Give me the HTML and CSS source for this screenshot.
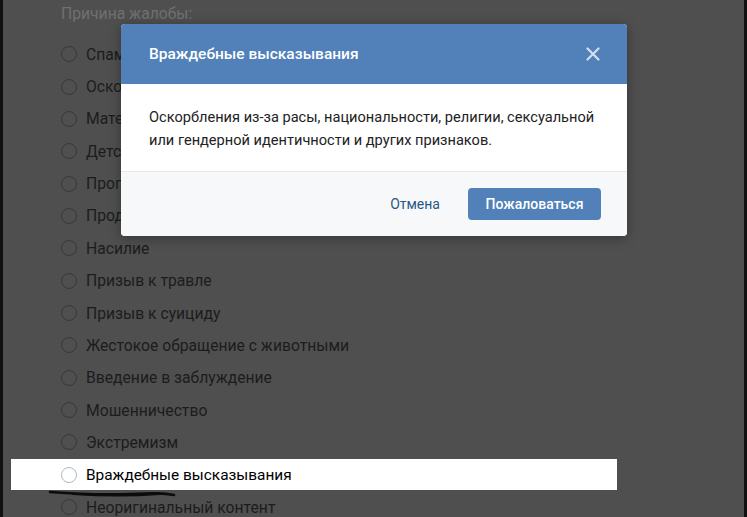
FILE: index.html
```html
<!DOCTYPE html>
<html lang="ru">
<head>
<meta charset="utf-8">
<title>Жалоба</title>
<link rel="stylesheet" href="styles.css">
</head>
<body>
<div class="page">
  <div class="edge"></div>
  <main class="content">
    <div class="caption">Причина жалобы:</div>
    <ul class="reasons">
      <li class="reason"><span class="radio"></span>Спам</li>
      <li class="reason"><span class="radio"></span>Оскорбления</li>
      <li class="reason"><span class="radio"></span>Материал для взрослых</li>
      <li class="reason"><span class="radio"></span>Детская порнография</li>
      <li class="reason"><span class="radio"></span>Пропаганда наркотиков</li>
      <li class="reason"><span class="radio"></span>Продажа оружия</li>
      <li class="reason"><span class="radio"></span>Насилие</li>
      <li class="reason"><span class="radio"></span>Призыв к травле</li>
      <li class="reason"><span class="radio"></span>Призыв к суициду</li>
      <li class="reason"><span class="radio"></span>Жестокое обращение с животными</li>
      <li class="reason"><span class="radio"></span>Введение в заблуждение</li>
      <li class="reason"><span class="radio"></span>Мошенничество</li>
      <li class="reason"><span class="radio"></span>Экстремизм</li>
      <li class="reason reason-active"><span class="radio"></span>Враждебные высказывания</li>
      <li class="reason"><span class="radio"></span>Неоригинальный контент</li>
    </ul>
    <svg class="scribble" width="130" height="10" viewBox="0 0 130 10">
      <path d="M2 4 C 28 6, 55 7, 82 6 S 115 5, 126 7" fill="none" stroke="#0c0c0c" stroke-width="2.6" stroke-linecap="round"/>
      <path d="M25 6 C 55 8, 85 8, 112 6" fill="none" stroke="#0c0c0c" stroke-width="2" stroke-linecap="round"/>
    </svg>
  </main>
  <div class="edge"></div>

  <div class="modal">
    <div class="modal-head">
      <span class="modal-title">Враждебные высказывания</span>
      <svg class="modal-close" width="14" height="14" viewBox="0 0 14 14">
        <path d="M1.5 1.5 L12.5 12.5 M12.5 1.5 L1.5 12.5" stroke="#ffffff" stroke-opacity="0.75" stroke-width="2.2" stroke-linecap="round"/>
      </svg>
    </div>
    <div class="modal-body">Оскорбления из-за расы, национальности, религии, сексуальной или гендерной идентичности и других признаков.</div>
    <div class="modal-foot">
      <span class="btn-link">Отмена</span>
      <span class="btn-primary">Пожаловаться</span>
    </div>
  </div>
</div>
</body>
</html>
```

FILE: styles.css
```css
html, body {
  margin: 0;
  padding: 0;
  height: 100%;
}
body {
  background: #4f4f4f;
  font-family: Roboto, "Liberation Sans", Arial, sans-serif;
  overflow: hidden;
}
.page {
  position: relative;
  display: flex;
  height: 517px;
}
.edge {
  width: 3px;
  flex: none;
  background: #111111;
}
.content {
  position: relative;
  flex: 1;
  padding: 3px 0 0 8px;
}
.caption {
  padding-left: 50px;
  font-size: 15.7px;
  line-height: 21px;
  color: #707070;
  height: 35px;
}
.reasons {
  list-style: none;
  margin: 0;
  padding: 0;
}
.reason {
  display: flex;
  align-items: center;
  height: 32.36px;
  padding-left: 50px;
  width: 556px;
  font-size: 15.7px;
  color: #1c1c1c;
}
.radio {
  width: 14px;
  height: 14px;
  border: 1px solid #383838;
  border-radius: 50%;
  margin-right: 9px;
  flex: none;
}
.reason-active {
  background: #ffffff;
  color: #000000;
  height: 31px;
  margin: 0.7px 0;
  font-size: 15.4px;
}
.reason-active .radio {
  border-color: #aebacb;
}
.scribble {
  position: absolute;
  left: 45px;
  top: 488px;
}
.modal {
  position: absolute;
  left: 121px;
  top: 24px;
  width: 506px;
  border-radius: 4px;
  overflow: hidden;
  background: #ffffff;
  box-shadow: 0 2px 12px rgba(0, 0, 0, 0.35);
}
.modal-head {
  height: 60px;
  background: #5181b8;
  display: flex;
  align-items: center;
  justify-content: space-between;
  padding: 0 27px 0 28px;
}
.modal-title {
  color: #ffffff;
  font-size: 15.5px;
  font-weight: 500;
}
.modal-body {
  padding: 22px 28px 19px;
  font-size: 14.6px;
  line-height: 23px;
  color: #222222;
}
.modal-foot {
  height: 64px;
  border-top: 1px solid #e7e8ec;
  background: #f7f8fa;
  display: flex;
  align-items: center;
  justify-content: flex-end;
  padding-right: 26px;
  gap: 28px;
}
.btn-link {
  font-size: 14px;
  color: #2a5885;
}
.btn-primary {
  display: flex;
  align-items: center;
  justify-content: center;
  width: 133px;
  height: 32px;
  border-radius: 4px;
  background: #5181b8;
  color: #ffffff;
  font-size: 14px;
  font-weight: 500;
}
```
